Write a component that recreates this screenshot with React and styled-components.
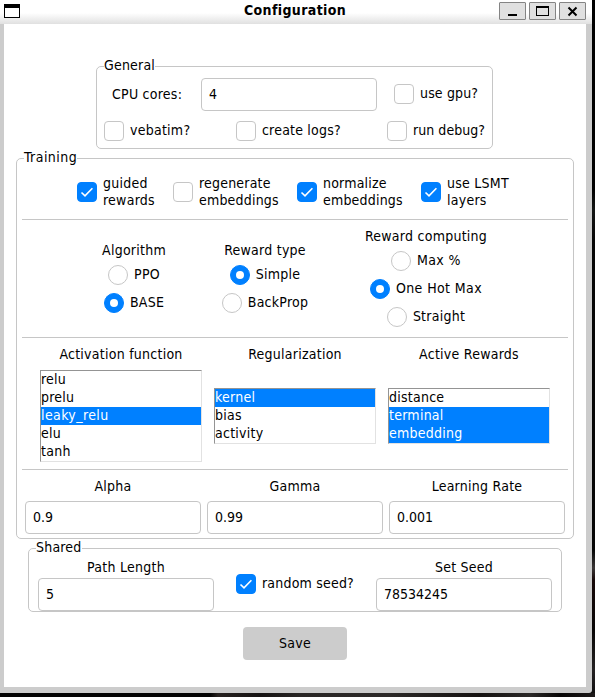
import React from "react";
import styled, { createGlobalStyle, css } from "styled-components";

const LINE = "#c6c6c6";
const BLUE = "#0080ff";

const GlobalStyle = createGlobalStyle`
  *, *::before, *::after { box-sizing: border-box; }
  body {
    margin: 0;
    background: #020202;
    font: 14px/17px "DejaVu Sans Condensed", "DejaVu Sans", sans-serif;
    font-stretch: condensed;
    letter-spacing: 0.25px;
    color: #000;
    overflow: hidden;
  }
`;

const Desktop = styled.div`
  width: 595px;
  height: 697px;
  background:
    linear-gradient(90deg, #020202 0 210px, #26211f 218px, #161313 260px, #292625 300px, #2c2928 390px, #151211 480px, #2b2928 530px, #080606 560px, #1d1a1a) 0 693px / 595px 4px no-repeat,
    linear-gradient(180deg, #000 0 190px, #131514 210px, #060606 240px 550px, #393535 568px, #160808 580px, #080606 630px, #242122 670px, #101010) 592px 0 / 3px 693px no-repeat;
`;

const Window = styled.div`
  width: 592px;
  height: 693px;
  background: #ccc;
  border-bottom-right-radius: 3px;
`;

const TitleBar = styled.header`
  height: 24px;
  display: grid;
  grid-template-columns: 88px 1fr 88px;
  align-items: start;
  padding: 2px 6px 0 4px;
  background: linear-gradient(#fff 0 13px, #e0e0e0 24px);
`;

const MenuIcon = styled.div`
  width: 16px;
  height: 14px;
  margin-top: 2px;
  border: 1px solid #000;
  border-top-width: 4px;
  background: #fff;
`;

const Title = styled.h1`
  margin: 0;
  font-size: 14px;
  line-height: 17px;
  font-weight: bold;
  letter-spacing: 0.38px;
  text-align: center;
`;

const WindowButtons = styled.div`
  display: flex;
  gap: 3px;
  justify-content: flex-end;
`;

const WindowButton = styled.button`
  width: 27px;
  height: 18px;
  padding: 0;
  border: 1px solid #848484;
  border-radius: 1px;
  background: #e0e0e0;
  svg { display: block; }
`;

const Body = styled.main`
  height: 663px;
  margin: 0 6px 0 4px;
  padding: 42px 0 0;
  display: flex;
  flex-direction: column;
  background: #fff;
`;

const Group = styled.section`
  position: relative;
  width: ${(p) => p.$width}px;
  height: ${(p) => p.$height}px;
  margin: 0 0 9px ${(p) => p.$left}px;
  border: 1px solid ${LINE};
  border-radius: 5px;
`;

const Legend = styled.h2`
  position: absolute;
  top: -10px;
  left: 7px;
  margin: 0;
  font-size: 14px;
  line-height: 17px;
  font-weight: normal;
  letter-spacing: ${(p) => p.$track || 0.2}px;
  background: #fff;
  white-space: nowrap;
`;

const Row = styled.div`
  display: flex;
  align-items: ${(p) => p.$align || "center"};
  height: ${(p) => p.$height}px;
  padding: ${(p) => p.$pad || "0"};
`;

const Divider = styled.hr`
  height: 1px;
  margin: 0 5px;
  border: 0;
  background: ${LINE};
`;

const Caption = styled.span`
  white-space: nowrap;
  width: 89px;
`;

const Option = styled.label`
  display: flex;
  align-items: center;
  gap: 6px;
  white-space: pre;
  flex: none;
  width: ${(p) => (p.$width ? p.$width + "px" : "auto")};
`;

const OptionText = styled.span`
  padding-bottom: ${(p) => (p.$multi ? 0 : 1)}px;
  letter-spacing: ${(p) => p.$track ?? 0.25}px;
`;

const Mark = styled.span`
  flex: none;
  display: flex;
  align-items: center;
  justify-content: center;
  width: 20px;
  height: 20px;
  border: 1px solid ${LINE};
  border-radius: ${(p) => (p.$round ? "50%" : "4px")};
  background: #fff;
  ${(p) => p.$on && css`
    border-color: ${BLUE};
    background: ${BLUE};
  `}
`;

const Dot = styled.i`
  width: 8px;
  height: 8px;
  border-radius: 50%;
  background: #fff;
`;

const TextInput = styled.input`
  flex: none;
  display: block;
  width: 176px;
  height: 33px;
  padding: 0 7px 1px;
  border: 1px solid ${LINE};
  border-radius: 4px;
  outline: 0;
  background: #fff;
  color: #000;
  font: inherit;
  letter-spacing: 0;
`;

const RadioColumn = styled.div`
  display: flex;
  flex-direction: column;
  align-items: center;
  width: ${(p) => p.$width}px;
`;

const RadioTitle = styled.div`
  height: 23px;
  white-space: nowrap;
`;

const RadioLine = styled.div`
  height: 28px;
`;

const Field = styled.div`
  display: flex;
  flex-direction: column;
  width: 176px;
  gap: ${(p) => p.$gap}px;
`;

const FieldTitle = styled.div`
  text-align: center;
  white-space: nowrap;
`;

const ListField = styled.div`
  width: 162px;
`;

const ListArea = styled.div`
  display: flex;
  align-items: center;
  height: 92px;
  margin-top: 7px;
`;

const ListBox = styled.ul`
  width: 162px;
  margin: 0;
  padding: 0;
  list-style: none;
  border: 1px solid #e2e2e2;
  border-top-color: #949494;
  border-left-color: #949494;
`;

const ListItem = styled.li`
  height: 18px;
  line-height: 17px;
  letter-spacing: ${(p) => (p.$wide ? 0.4 : 0.25)}px;
  color: ${(p) => (p.$on ? "#fff" : "#000")};
  background: ${(p) => (p.$on ? BLUE : "#fff")};
`;

const SaveButton = styled.button`
  width: 104px;
  height: 33px;
  margin: 6px 0 0 239px;
  padding: 0 0 1px;
  border: 0;
  border-radius: 4px;
  background: #ccc;
  color: #000;
  font: inherit;
  letter-spacing: inherit;
`;

function Check({ on, multi, width, track, children }) {
  return (
    <Option $width={width}>
      <Mark $on={on}>
        {on && (
          <svg width="18" height="18" viewBox="0 0 18 18" fill="none" stroke="#fff" strokeWidth="1.6">
            <path d="M3.5 9.5 7 12.9 14.4 5.2" />
          </svg>
        )}
      </Mark>
      <OptionText $multi={multi} $track={track}>{children}</OptionText>
    </Option>
  );
}

function Radios({ width, title, options, selected }) {
  return (
    <RadioColumn $width={width}>
      <RadioTitle>{title}</RadioTitle>
      {options.map((o) => (
        <RadioLine key={o}>
          <Option>
            <Mark $round $on={o === selected}>{o === selected && <Dot />}</Mark>
            <OptionText $track={o.includes("Max") ? 0.4 : undefined}>{o}</OptionText>
          </Option>
        </RadioLine>
      ))}
    </RadioColumn>
  );
}

function List({ title, items, selected }) {
  return (
    <ListField>
      <FieldTitle>{title}</FieldTitle>
      <ListArea>
        <ListBox>
          {items.map((i) => (
            <ListItem key={i} $on={selected.includes(i)} $wide={i.includes("_")}>{i}</ListItem>
          ))}
        </ListBox>
      </ListArea>
    </ListField>
  );
}

function LabeledInput({ title, value, gap }) {
  return (
    <Field $gap={gap}>
      <FieldTitle>{title}</FieldTitle>
      <TextInput defaultValue={value} aria-label={title} />
    </Field>
  );
}

const InputRow = styled(Row)`
  gap: 6px;
`;

const ListRow = styled(Row)`
  gap: 12px;
`;

const SeedCheck = styled.div`
  width: 162px;
  padding: 15px 0 0 22px;
`;

export default function App() {
  return (
    <Desktop>
      <GlobalStyle />
      <Window>
        <TitleBar>
          <MenuIcon />
          <Title>Configuration</Title>
          <WindowButtons>
            <WindowButton aria-label="Minimize">
              <svg width="25" height="16"><rect x="8" y="11" width="9" height="2" /></svg>
            </WindowButton>
            <WindowButton aria-label="Maximize">
              <svg width="25" height="16" shapeRendering="crispEdges">
                <path d="M6 3h13v10H6zM7 5v7h11V5z" fillRule="evenodd" />
              </svg>
            </WindowButton>
            <WindowButton aria-label="Close">
              <svg width="25" height="16" stroke="#000" strokeWidth="2"><path d="M8.5 4.5 16.5 12.5M16.5 4.5 8.5 12.5" /></svg>
            </WindowButton>
          </WindowButtons>
        </TitleBar>
        <Body>
          <Group $left={92} $width={397} $height={83}>
            <Legend>General</Legend>
            <Row $height={54} $pad="0 0 0 15px">
              <Caption>CPU cores:</Caption>
              <TextInput defaultValue="4" aria-label="CPU cores" />
              <Row $pad="0 0 0 17px"><Check track={0.15}>use gpu?</Check></Row>
            </Row>
            <Row $height={20} $pad="0 0 0 7px">
              <Check width={132}>vebatim?</Check>
              <Check width={151} track={0.2}>create logs?</Check>
              <Check track={0.05}>run debug?</Check>
            </Row>
          </Group>

          <Group $left={12} $width={558} $height={381}>
            <Legend $track={0.45}>Training</Legend>
            <Row $height={60} $pad="6px 0 0 60px">
              <Check on multi width={96}>{"guided\nrewards"}</Check>
              <Check multi width={124} track={0.2}>{"regenerate\nembeddings"}</Check>
              <Check on multi width={124} track={0.2}>{"normalize\nembeddings"}</Check>
              <Check on multi>{"use LSMT\nlayers"}</Check>
            </Row>
            <Divider />
            <Row $height={117} $pad="5px 0 0 55px">
              <Radios width={124} title="Algorithm" options={["PPO", "BASE"]} selected="BASE" />
              <Radios width={138} title="Reward type" options={["Simple", "BackProp"]} selected="Simple" />
              <Radios width={184} title="Reward computing" options={["Max %", "One Hot Max", "Straight"]} selected="One Hot Max" />
            </Row>
            <Divider />
            <ListRow $height={131} $align="flex-start" $pad="8px 0 0 23px">
              <List title="Activation function" items={["relu", "prelu", "leaky_relu", "elu", "tanh"]} selected={["leaky_relu"]} />
              <List title="Regularization" items={["kernel", "bias", "activity"]} selected={["kernel"]} />
              <List title="Active Rewards" items={["distance", "terminal", "embedding"]} selected={["terminal", "embedding"]} />
            </ListRow>
            <Divider />
            <InputRow $height={68} $align="flex-start" $pad="8px 0 0 8px">
              <LabeledInput title="Alpha" value="0.9" gap={6} />
              <LabeledInput title="Gamma" value="0.99" gap={6} />
              <LabeledInput title="Learning Rate" value="0.001" gap={6} />
            </InputRow>
          </Group>

          <Group $left={24} $width={534} $height={64}>
            <Legend>Shared</Legend>
            <Row $height={62} $align="flex-start" $pad="10px 0 0 9px">
              <LabeledInput title="Path Length" value="5" gap={2} />
              <SeedCheck><Check on track={0.2}>random seed?</Check></SeedCheck>
              <LabeledInput title="Set Seed" value="78534245" gap={2} />
            </Row>
          </Group>
          <SaveButton>Save</SaveButton>
        </Body>
      </Window>
    </Desktop>
  );
}
